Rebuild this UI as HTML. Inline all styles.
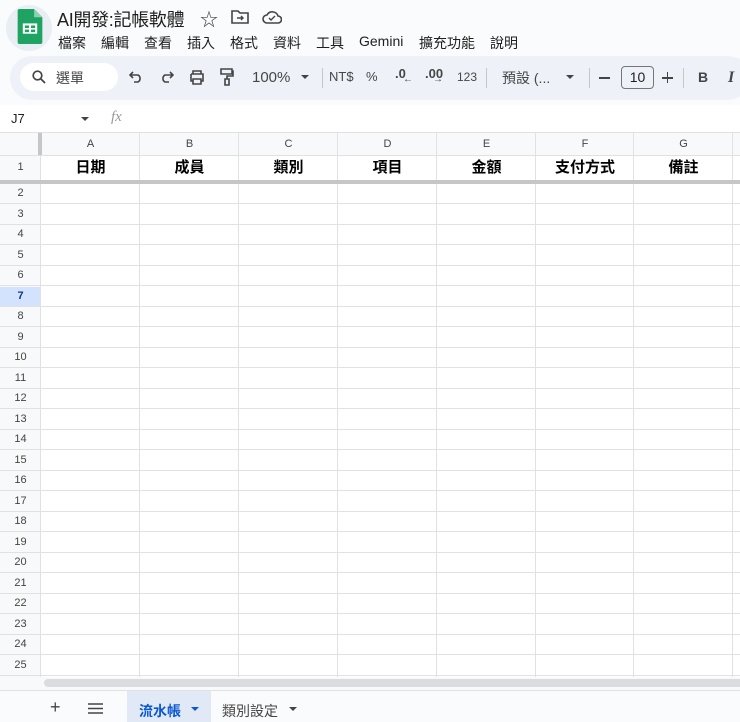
<!DOCTYPE html>
<html><head><meta charset="utf-8">
<style>
*{margin:0;padding:0;box-sizing:border-box}
body{width:740px;height:722px;overflow:hidden;background:#f9fbfd;font-family:"Liberation Sans","Noto Sans CJK TC",sans-serif;color:#1f1f1f;position:relative}
.a{position:absolute;white-space:nowrap}
.m{position:absolute;top:33px;font-size:14px;white-space:nowrap}
.tb{color:#444746;font-size:14px}
.grid{position:absolute;left:0;top:133px;width:740px;height:545px;background:#fff;overflow:hidden}
.cl{position:absolute;top:0;bottom:0;width:1px;background:#e1e1e1}
.rl{position:absolute;left:0;right:0;height:1px;background:#e1e1e1}
.ch{position:absolute;top:0;height:22px;font-size:11px;color:#444;text-align:center;line-height:22px}
.rh{position:absolute;left:0;width:41px;font-size:11px;color:#444;text-align:center}
.h1{position:absolute;top:22px;height:25px;line-height:25px;font-size:15px;font-weight:bold;text-align:center;color:#000}
</style></head><body>
<div class="a" style="left:6px;top:5px;width:46px;height:46px;border-radius:50%;background:#e9eef4"></div>
<svg class="a" style="left:17px;top:9px" width="26" height="35" viewBox="0 0 24 34"><path d="M2 0h14l8 8v24a2 2 0 0 1-2 2H2a2 2 0 0 1-2-2V2a2 2 0 0 1 2-2z" fill="#1ea362"/><path d="M16 0v8h8z" fill="#8ed1b1"/><rect x="5" y="14" width="14" height="10" fill="#fff"/><rect x="7" y="16" width="4" height="2.5" fill="#1ea362"/><rect x="13" y="16" width="4" height="2.5" fill="#1ea362"/><rect x="7" y="20" width="4" height="2.5" fill="#1ea362"/><rect x="13" y="20" width="4" height="2.5" fill="#1ea362"/></svg>
<div class="a" style="left:57px;top:6px;font-size:18px;letter-spacing:-0.3px">AI開發:記帳軟體</div>
<div class="a" style="left:200px;top:6px;font-size:18px;color:#444">☆</div>
<svg class="a" style="left:231px;top:10px" width="18" height="14" viewBox="0 0 18 14"><path d="M1 1h6l2 2h8v10H1z" fill="none" stroke="#444" stroke-width="1.6"/><path d="M6 8h6M10 6l2 2-2 2" fill="none" stroke="#444" stroke-width="1.4"/></svg>
<svg class="a" style="left:262px;top:10px" width="20" height="14" viewBox="0 0 20 14"><path d="M5 13a4 4 0 0 1 0-8 6 6 0 0 1 11 1 3.5 3.5 0 0 1 0 7z" fill="none" stroke="#444" stroke-width="1.6"/><path d="M7 8l2 2 4-4" fill="none" stroke="#444" stroke-width="1.4"/></svg>
<div class="m" style="left:58px">檔案</div><div class="m" style="left:101px">編輯</div><div class="m" style="left:144px">查看</div><div class="m" style="left:187px">插入</div><div class="m" style="left:230px">格式</div><div class="m" style="left:273px">資料</div><div class="m" style="left:316px">工具</div><div class="m" style="left:359px">Gemini</div><div class="m" style="left:419px">擴充功能</div><div class="m" style="left:490px">說明</div>
<div class="a" style="left:10px;top:56px;width:740px;height:44px;border-radius:22px;background:#eef2f8"></div>
<div class="a" style="left:20px;top:63px;width:98px;height:28px;border-radius:14px;background:#fff"></div>
<svg class="a" style="left:32px;top:70px" width="14" height="14" viewBox="0 0 14 14"><circle cx="5.5" cy="5.5" r="4.3" fill="none" stroke="#444" stroke-width="1.7"/><path d="M8.7 8.7L13 13" stroke="#444" stroke-width="1.8"/></svg>
<div class="a tb" style="left:56px;top:68px">選單</div>
<svg class="a" style="left:129px;top:71px" width="14" height="12" viewBox="0 0 14 12"><path d="M4 1L1 4l3 3M1 4h8a4 4 0 0 1 0 7H5" fill="none" stroke="#444" stroke-width="1.6"/></svg>
<svg class="a" style="left:160px;top:71px" width="14" height="12" viewBox="0 0 14 12"><path d="M10 1l3 3-3 3M13 4H5a4 4 0 0 0 0 7h4" fill="none" stroke="#444" stroke-width="1.6"/></svg>
<svg class="a" style="left:189px;top:70px" width="16" height="15" viewBox="0 0 16 15"><path d="M4 4V1h8v3M2 4h12v7h-2M4 11H2V4M4 9h8v5H4z" fill="none" stroke="#444" stroke-width="1.6"/></svg>
<svg class="a" style="left:220px;top:68px" width="14" height="18" viewBox="0 0 14 18"><path d="M1 1h11v5H1zM12 3h1v5H7v3M5 11h4v6H5z" fill="none" stroke="#444" stroke-width="1.6"/></svg>
<div class="a tb" style="left:252px;top:69px;font-size:15px">100%</div>
<svg class="a" style="left:301px;top:75px" width="8" height="4"><path d="M0 0h8L4 4z" fill="#444"/></svg>
<div class="a" style="left:322px;top:68px;width:1px;height:20px;background:#c7c7c7"></div>
<div class="a tb" style="left:329px;top:69px;font-size:13px">NT$</div>
<div class="a tb" style="left:366px;top:69px;font-size:13px">%</div>
<div class="a tb" style="left:395px;top:66px;font-size:13px;font-weight:bold">.0</div>
<div class="a tb" style="left:403px;top:74px;font-size:10px">←</div>
<div class="a tb" style="left:425px;top:66px;font-size:13px;font-weight:bold">.00</div>
<div class="a tb" style="left:433px;top:74px;font-size:10px">→</div>
<div class="a tb" style="left:457px;top:70px;font-size:12px">123</div>
<div class="a" style="left:486px;top:68px;width:1px;height:20px;background:#c7c7c7"></div>
<div class="a tb" style="left:502px;top:68px">預設 (...</div>
<svg class="a" style="left:566px;top:75px" width="8" height="4"><path d="M0 0h8L4 4z" fill="#444"/></svg>
<div class="a" style="left:589px;top:68px;width:1px;height:20px;background:#c7c7c7"></div>
<div class="a" style="left:599px;top:77px;width:11px;height:1.6px;background:#444"></div>
<div class="a" style="left:621px;top:66px;width:33px;height:23px;border:1px solid #747775;border-radius:4px;font-size:14px;text-align:center;line-height:21px;color:#1f1f1f">10</div>
<div class="a" style="left:662px;top:77px;width:11px;height:1.6px;background:#444"></div>
<div class="a" style="left:666.7px;top:72px;width:1.6px;height:11px;background:#444"></div>
<div class="a" style="left:683px;top:68px;width:1px;height:20px;background:#c7c7c7"></div>
<div class="a tb" style="left:698px;top:69px;font-weight:bold">B</div>
<div class="a tb" style="left:728px;top:69px;font-style:italic;font-weight:bold;font-family:'Liberation Serif',serif;font-size:16px">I</div>
<div class="a" style="left:0;top:105px;width:740px;height:28px;background:#fff;border-bottom:1px solid #e1e1e1"></div>
<div class="a" style="left:11px;top:111px;font-size:13px">J7</div>
<svg class="a" style="left:81px;top:117px" width="8" height="4"><path d="M0 0h8L4 4z" fill="#444"/></svg>
<div class="a" style="left:111px;top:109px;font-size:15px;color:#999;font-style:italic;font-family:'Liberation Serif',serif">fx</div>
<div class="grid" id="g"></div>
<div class="a" style="left:0;top:677px;width:740px;height:13px;background:#f8f9fa"></div>
<div class="a" style="left:44px;top:679px;width:700px;height:8px;border-radius:4px;background:#dadce0"></div>
<div class="a" style="left:0;top:690px;width:740px;height:32px;background:#f9fbfd;border-top:1px solid #e1e1e1"></div>
<div class="a" style="left:50px;top:697px;font-size:18px;color:#444">+</div>
<svg class="a" style="left:88px;top:703px" width="15" height="11"><path d="M0 1h15M0 5.5h15M0 10h15" stroke="#444" stroke-width="1.6"/></svg>
<div class="a" style="left:127px;top:691px;width:84px;height:31px;background:#e1e9f7"></div>
<div class="a" style="left:139px;top:701px;font-size:14px;color:#0b57d0;font-weight:bold">流水帳</div>
<svg class="a" style="left:191px;top:707px" width="8" height="4"><path d="M0 0h8L4 4z" fill="#0b57d0"/></svg>
<div class="a" style="left:222px;top:701px;font-size:14px;color:#444">類別設定</div>
<svg class="a" style="left:289px;top:707px" width="8" height="4"><path d="M0 0h8L4 4z" fill="#444"/></svg>
<script>
var g=document.getElementById('g'),h='';
var cols=[41,140,239,338,437,536,634,733],L='ABCDEFG',H=['日期','成員','類別','項目','金額','支付方式','備註'];
h+='<div style="position:absolute;left:0;top:0;width:740px;height:22px;background:#f8f9fa"></div>';
h+='<div style="position:absolute;left:0;top:0;width:41px;height:545px;background:#f8f9fa"></div>';
h+='<div style="position:absolute;left:0;top:154px;width:41px;height:20px;background:#d3e3fd"></div>';
for(var i=0;i<7;i++){h+='<div class="ch" style="left:'+cols[i]+'px;width:'+(cols[i+1]-cols[i])+'px">'+L[i]+'</div>';
h+='<div class="h1" style="left:'+cols[i]+'px;width:'+(cols[i+1]-cols[i])+'px">'+H[i]+'</div>';}
for(var i=0;i<cols.length;i++)h+='<div class="cl" style="left:'+(cols[i]-1)+'px"></div>';
h+='<div style="position:absolute;left:38px;top:0;width:4px;height:22px;background:#c4c7c5"></div>';
h+='<div class="rl" style="top:22px"></div>';
h+='<div class="rh" style="top:22px;height:25px;line-height:25px">1</div>';
h+='<div style="position:absolute;left:0;top:47px;width:740px;height:4px;background:#c4c7c5"></div>';
for(var r=2;r<=26;r++){var t=50+(r-2)*20.5;
if(r<=25)h+='<div class="rh" style="top:'+t+'px;height:20px;line-height:20px;'+(r==7?'font-weight:bold;color:#0b3a8a':'')+'">'+r+'</div>';
h+='<div class="rl" style="top:'+(t+20)+'px"></div>';}
g.innerHTML=h;
</script>
</body></html>
